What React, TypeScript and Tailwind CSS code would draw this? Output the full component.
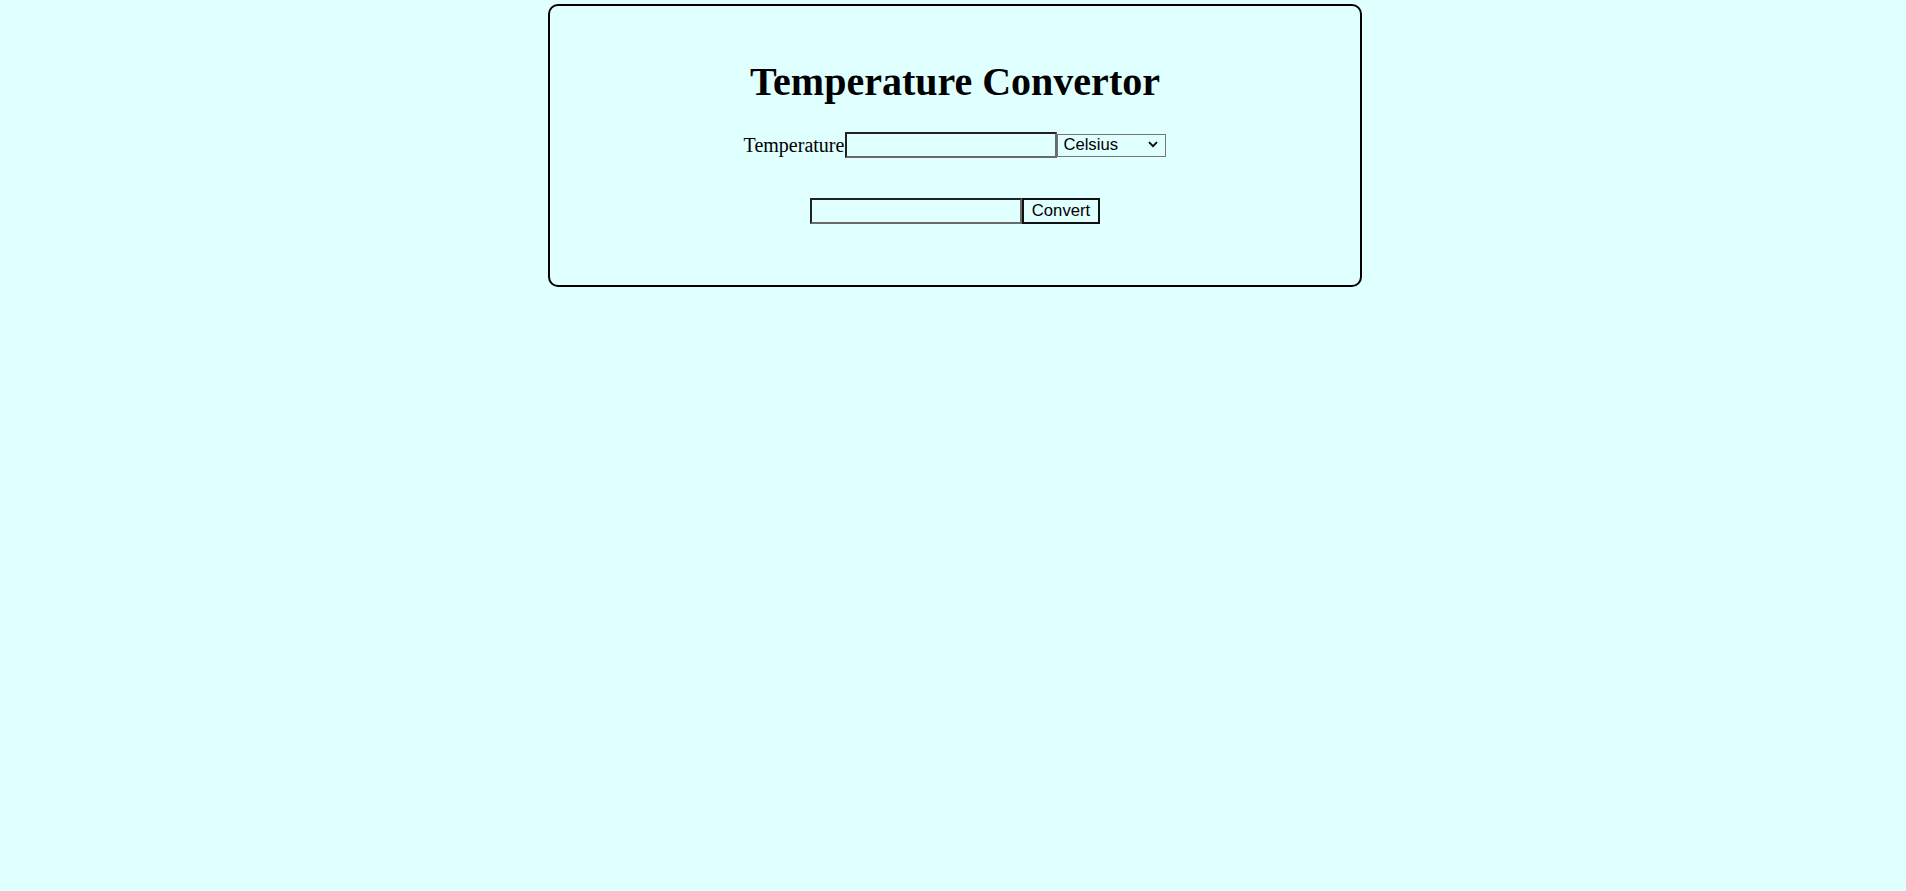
import React from "react";

export default function App() {
  return (
    <div className="min-h-screen w-full bg-[#e0ffff] pt-[4px] pl-[548px] font-['Liberation_Serif','Times_New_Roman',serif] text-black">
      <div className="flex h-[283px] w-[814px] flex-col items-center rounded-[10px] border-2 border-black">
        <h1 className="mt-[53px] text-[40px] font-bold leading-[45px]">Temperature Convertor</h1>
        <div className="mt-[28px] flex items-center">
          <label className="text-[20px] leading-none">Temperature</label>
          <input
            type="text"
            className="ml-[1px] h-[26px] w-[212px] border-2 border-t-[#222] border-l-[#222] border-r-[#6b6b6b] border-b-[#6b6b6b] bg-transparent px-1 font-['Liberation_Sans',Arial,sans-serif] text-[16.67px] outline-none"
          />
          <div className="relative">
            <select className="h-[23px] w-[109px] appearance-none rounded-none border border-[#767676] bg-transparent pl-[5px] font-['Liberation_Sans',Arial,sans-serif] text-[16.67px] leading-none outline-none">
              <option>Celsius</option>
              <option>Fahrenheit</option>
              <option>Kelvin</option>
            </select>
            <svg
              className="pointer-events-none absolute right-[8px] top-[8px]"
              width="10"
              height="7"
              viewBox="0 0 10 7"
              fill="none"
            >
              <path d="M1 1.2 L5 5.2 L9 1.2" stroke="#000" strokeWidth="1.8" />
            </svg>
          </div>
        </div>
        <div className="mt-[40px] flex items-center">
          <input
            type="text"
            className="h-[26px] w-[212px] border-2 border-t-[#222] border-l-[#222] border-r-[#6b6b6b] border-b-[#6b6b6b] bg-transparent px-1 font-['Liberation_Sans',Arial,sans-serif] text-[16.67px] outline-none"
          />
          <button className="h-[26px] w-[78px] border-2 border-[#111] bg-transparent font-['Liberation_Sans',Arial,sans-serif] text-[16.67px] leading-none">
            Convert
          </button>
        </div>
      </div>
    </div>
  );
}
